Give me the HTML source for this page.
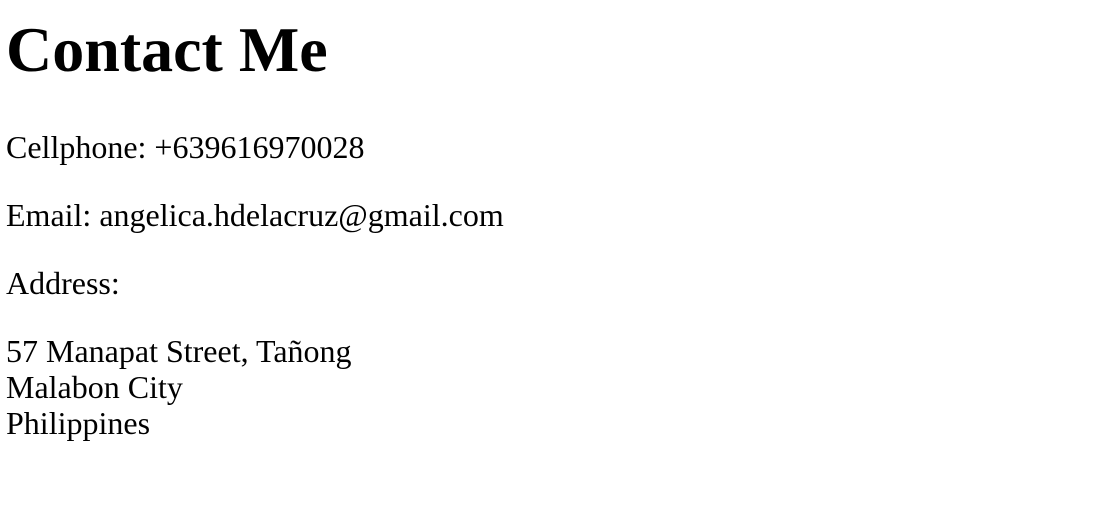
<!DOCTYPE html>
<html><head><style>
body{margin:0;background:#fff;color:#000;font-family:"Liberation Serif",serif;}
div{position:absolute;left:6px;white-space:nowrap;}
.h{font-size:64px;font-weight:bold;line-height:64px;top:18px;}
.p{font-size:32px;line-height:36px;}
</style></head><body>
<div class="h">Contact Me</div>
<div class="p" style="top:129px">Cellphone: +639616970028</div>
<div class="p" style="top:197px">Email: angelica.hdelacruz@gmail.com</div>
<div class="p" style="top:265px">Address:</div>
<div class="p" style="top:333px">57 Manapat Street, Tañong<br>Malabon City<br>Philippines</div>
</body></html>
